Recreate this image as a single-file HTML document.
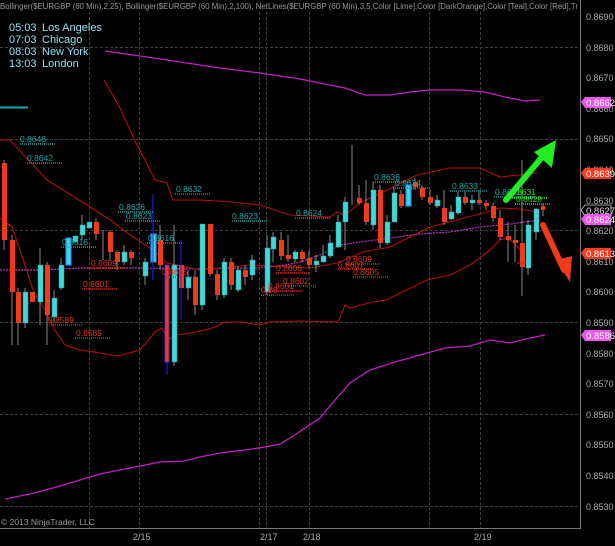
<!DOCTYPE html>
<html><head><meta charset="utf-8"><style>
html,body{margin:0;padding:0;background:#000;width:615px;height:546px;overflow:hidden}
svg{display:block}
text{font-family:"Liberation Sans",sans-serif}
</style></head><body>
<svg width="615" height="546" viewBox="0 0 615 546" xmlns="http://www.w3.org/2000/svg">
<rect width="615" height="546" fill="#000"/>
<g stroke="#3a3f44" stroke-width="1" stroke-dasharray="3,2">
<line x1="0" y1="47.5" x2="580" y2="47.5"/><line x1="0" y1="139.5" x2="580" y2="139.5"/>
<line x1="0" y1="230.5" x2="580" y2="230.5"/><line x1="0" y1="322.5" x2="580" y2="322.5"/>
<line x1="0" y1="414.5" x2="580" y2="414.5"/><line x1="0" y1="506.5" x2="580" y2="506.5"/>
<line x1="89.5" y1="12" x2="89.5" y2="528"/><line x1="139.5" y1="12" x2="139.5" y2="528"/>
<line x1="259.5" y1="12" x2="259.5" y2="528"/><line x1="266.5" y1="12" x2="266.5" y2="528"/>
<line x1="309.5" y1="12" x2="309.5" y2="528"/><line x1="429.5" y1="12" x2="429.5" y2="528"/>
<line x1="480.5" y1="12" x2="480.5" y2="528"/>
</g>
<line x1="580.5" y1="0" x2="580.5" y2="529" stroke="#777"/>
<line x1="0" y1="528.5" x2="581" y2="528.5" stroke="#777"/>
<g fill="#aaa" font-size="9">
<text x="586" y="20">0.8690</text><text x="586" y="51">0.8680</text><text x="586" y="81">0.8670</text>
<text x="586" y="112">0.8660</text><text x="586" y="142">0.8650</text><text x="586" y="173">0.8640</text>
<text x="586" y="204">0.8630</text><text x="586" y="234">0.8620</text><text x="586" y="265">0.8610</text>
<text x="586" y="295">0.8600</text><text x="586" y="326">0.8590</text><text x="586" y="357">0.8580</text>
<text x="586" y="387">0.8570</text><text x="586" y="418">0.8560</text><text x="586" y="448">0.8550</text>
<text x="586" y="479">0.8540</text><text x="586" y="510">0.8530</text>
<text x="133" y="540">2/15</text><text x="260" y="540">2/17</text><text x="303" y="540">2/18</text><text x="474" y="540">2/19</text>
</g>
<text x="1" y="525" fill="#999" font-size="8.5">© 2013 NinjaTrader, LLC</text>
<text x="0" y="9" fill="#999" font-size="8.5" textLength="578" lengthAdjust="spacingAndGlyphs">Bollinger($EURGBP (60 Min),2,25), Bollinger($EURGBP (60 Min),2,100), NetLines($EURGBP (60 Min),3,5,Color [Lime],Color [DarkOrange],Color [Teal],Color [Red],Tr</text>
<g fill="#8fe0f0" font-size="11">
<text x="9" y="31">05:03</text><text x="42" y="31">Los Angeles</text>
<text x="9" y="43">07:03</text><text x="42" y="43">Chicago</text>
<text x="9" y="55">08:03</text><text x="42" y="55">New York</text>
<text x="9" y="67">13:03</text><text x="42" y="67">London</text>
</g>
<line x1="0" y1="107.5" x2="28" y2="107.5" stroke="#1aa" stroke-width="2"/>
<g fill="none" stroke="#c020c0" stroke-width="1.3">
<path d="M105,51 L140,56 L180,62 L220,68 L260,73 L300,79 L330,85 L345,88 L365,95 L390,95 L410,92 L430,90 L460,90 L485,92 L505,97 L525,101 L540,100"/>
<path d="M5,499 L30,494 L45,490 L60,486 L80,480 L100,474 L120,470 L140,466 L160,462 L185,461 L200,457 L220,453 L245,450 L265,447 L280,444 L290,438 L305,428 L320,418 L335,400 L350,383 L370,370 L395,362 L420,355 L445,348 L470,346 L490,340 L510,343 L530,338 L545,335"/>
</g>
<g fill="none" stroke="#c030c0" stroke-width="1.2" stroke-dasharray="2,1">
<path d="M0,270 L40,270 L80,268 L140,268 L200,269 L250,268 L280,266 L300,262 L320,255 L340,245 L360,242 L390,238 L420,234 L450,232 L480,227 L510,224 L540,220"/>
</g>
<g fill="none" stroke="#b01010" stroke-width="1.1">
<path d="M104,80 L120,108 L135,141 L145,160 L155,180 L167,183 L173,200 L200,200 L233,202 L260,205 L290,215 L330,217 L337,212 L345,215 L360,203 L393,187 L417,175 L450,168 L480,168 L500,177 L537,173"/>
<path d="M0,140 L10,140 L47,180 L90,207 L110,220 L133,237 L153,250 L167,263 L200,270 L250,265 L310,268 L337,263 L363,252 L390,247 L410,237 L430,227 L457,220 L483,213 L500,208 L520,209 L537,212"/>
<path d="M0,218 L12,227 L20,250 L33,290 L45,310 L55,330 L65,345 L80,350 L100,353 L118,356 L140,350 L155,332 L162,328 L168,340 L175,335 L190,333 L205,330 L215,327 L225,322 L240,322 L260,325 L270,322 L300,321 L338,322 L345,305 L350,308 L373,302 L387,300 L400,293 L427,280 L450,275 L470,265 L490,250 L500,240 L507,238 L513,242 L523,253"/>
</g>
<g stroke="#888" stroke-width="1">
<path d="M4,160V250M12,235V345M18,288V345M25,288V328M40,248V325M47,262V345M54,290V322M61,258V290M82,215V240M96,218V240M103,230V260M110,230V260M117,250V270M124,245V265M131,250V265M145,258V285M160,225V270M174,225V366M188,270V300M195,270V315M202,224V310M210,225V276M217,270V300M224,258V298M231,258V290M238,266V292M245,265V285M252,255V280M267,235V295M273,232V262M281,232V260M288,235V262M295,250V262M302,250V262M309,250V268M316,255V272M323,245V262M330,235V258M338,215V248M345,197V250M352,145V205M359,185V205M366,180V225M373,182V230M380,185V248M387,215V245M394,188V222M401,190V208M415,178V190M422,185V200M430,190V205M437,195V208M444,190V225M451,205V220M458,192V215M465,192V205M472,195V210M479,190V205M486,200V210M493,203V222M500,210V240M508,222V262M515,225V262M522,160V296M528,220V275M536,208V240M543,204V216"/>
</g>
<g fill="#f03a1a">
<rect x="2" y="163" width="5" height="77"/><rect x="10" y="240" width="5" height="52"/><rect x="16" y="292" width="5" height="31"/>
<rect x="30" y="292" width="5" height="10"/><rect x="45" y="265" width="5" height="50"/><rect x="94" y="222" width="5" height="12"/>
<rect x="108" y="232" width="5" height="20"/><rect x="115" y="252" width="5" height="10"/><rect x="129" y="252" width="5" height="6"/>
<rect x="158" y="240" width="5" height="25"/><rect x="165" y="265" width="4" height="97" stroke="#62f" stroke-width="0.8"/><rect x="179" y="265" width="5" height="23"/>
<rect x="193" y="277" width="5" height="28"/><rect x="208" y="224" width="5" height="50"/><rect x="215" y="274" width="5" height="21"/>
<rect x="229" y="262" width="5" height="23"/><rect x="243" y="270" width="5" height="7"/><rect x="279" y="240" width="5" height="16"/>
<rect x="286" y="255" width="5" height="4"/><rect x="300" y="252" width="5" height="7"/><rect x="307" y="258" width="5" height="7"/>
<rect x="357" y="198" width="5" height="5"/><rect x="364" y="203" width="5" height="19"/><rect x="378" y="190" width="5" height="53"/>
<rect x="399" y="194" width="5" height="12"/><rect x="413" y="182" width="5" height="5"/><rect x="420" y="188" width="5" height="9"/>
<rect x="428" y="197" width="5" height="6"/><rect x="442" y="208" width="5" height="14"/><rect x="463" y="197" width="5" height="6"/>
<rect x="477" y="200" width="5" height="3"/><rect x="484" y="203" width="5" height="3"/><rect x="491" y="206" width="5" height="12"/>
<rect x="498" y="218" width="5" height="19"/><rect x="506" y="236" width="5" height="4"/><rect x="513" y="240" width="5" height="3"/>
<rect x="520" y="243" width="5" height="24"/><rect x="541" y="206" width="4" height="4"/>
</g>
<g fill="#40d8d8" stroke="#2a9a9a" stroke-width="0.5">
<rect x="23" y="292" width="5" height="31"/><rect x="38" y="265" width="5" height="37"/><rect x="52" y="298" width="5" height="19"/>
<rect x="59" y="265" width="5" height="23"/><rect x="66" y="238" width="5" height="27" stroke="#28f" stroke-width="1.2"/><rect x="73" y="236" width="5" height="6"/>
<rect x="80" y="225" width="5" height="10"/><rect x="87" y="222" width="5" height="6"/><rect x="122" y="252" width="5" height="10"/>
<rect x="143" y="262" width="5" height="14"/><rect x="151" y="234" width="5" height="28" stroke="#28f" stroke-width="1.2"/><rect x="172" y="265" width="5" height="97"/>
<rect x="186" y="277" width="5" height="11"/><rect x="200" y="224" width="5" height="81"/><rect x="222" y="262" width="5" height="33"/>
<rect x="236" y="270" width="5" height="20"/><rect x="250" y="260" width="5" height="15"/><rect x="265" y="248" width="5" height="44"/>
<rect x="271" y="237" width="5" height="12"/><rect x="293" y="252" width="5" height="7"/><rect x="314" y="261" width="5" height="4"/>
<rect x="321" y="256" width="5" height="6"/><rect x="328" y="243" width="5" height="13"/><rect x="336" y="222" width="5" height="25"/>
<rect x="343" y="202" width="5" height="20"/><rect x="371" y="190" width="5" height="35"/><rect x="385" y="222" width="5" height="21"/>
<rect x="392" y="193" width="5" height="29"/><rect x="406" y="185" width="5" height="21" stroke="#28f" stroke-width="1.2"/><rect x="435" y="200" width="5" height="6"/>
<rect x="449" y="212" width="5" height="7"/><rect x="456" y="197" width="5" height="16"/><rect x="470" y="200" width="5" height="3"/>
<rect x="526" y="225" width="5" height="43"/><rect x="534" y="209" width="5" height="23"/>
</g>
<line x1="153" y1="194" x2="153" y2="280" stroke="#22f" stroke-width="1"/>
<line x1="181" y1="240" x2="181" y2="320" stroke="#22f" stroke-width="1"/>
<line x1="167" y1="362" x2="167" y2="375" stroke="#22f" stroke-width="1"/>
<line x1="517" y1="263" x2="526" y2="263" stroke="#d02020" stroke-width="1"/>
<g stroke="#1a9a9a" stroke-width="1.5" stroke-dasharray="1,1">
<path d="M20,144H55M27,163H62M175,194H210M118,212H153M125,221H160M232,221H267M61,247H97M147,243H182M295,218H330M373,182H410M393,188H430M450,191H487M494,197H533"/>
</g>
<g stroke="#20e020" stroke-width="1.5" stroke-dasharray="1,1"><path d="M510,198H548M515,204H550"/></g>
<g fill="#1aa8a8" font-size="8.5">
<text x="20" y="142">0.8648</text><text x="27" y="161">0.8642</text><text x="176" y="192">0.8632</text>
<text x="119" y="210">0.8626</text><text x="126" y="219">0.8623</text><text x="232" y="219">0.8623</text>
<text x="62" y="245">0.8616</text><text x="148" y="241">0.8616</text><text x="296" y="216">0.8624</text>
<text x="374" y="180">0.8636</text><text x="395" y="186">0.8634</text><text x="452" y="189">0.8633</text><text x="495" y="195">0.8631</text>
</g>
<g fill="#20e020" font-size="8.5"><text x="510" y="195">0.8631</text><text x="516" y="202">0.8629</text></g>
<g stroke="#e02020" stroke-width="1.5" stroke-dasharray="1,1">
<path d="M90,268H125M82,289H118M47,325H83M75,338H110M276,273H310M283,286H317M268,291H302M261,295H295M345,264H380M338,269H373M353,277H388M165,277H195"/>
</g>
<g fill="#e03020" font-size="8.5">
<text x="91" y="266">0.8609</text><text x="83" y="287">0.8601</text><text x="48" y="323">0.8589</text><text x="76" y="336">0.8585</text>
<text x="162" y="275">0.8605</text><text x="276" y="271">0.8606</text><text x="283" y="284">0.8602</text><text x="268" y="289">0.8601</text>
<text x="261" y="293">0.86</text><text x="346" y="262">0.8609</text><text x="338" y="268">0.8607</text><text x="353" y="275">0.8605</text>
</g>
<line x1="548" y1="150" x2="506" y2="200" stroke="#20ee20" stroke-width="6" stroke-linecap="round"/>
<polygon points="556,140 552,168 534,152" fill="#20ee20"/>
<line x1="543" y1="225" x2="564" y2="270" stroke="#f03a1a" stroke-width="6" stroke-linecap="round"/>
<polygon points="570,282 556,260 572,256" fill="#f03a1a"/>
<g font-size="9.5">
<polygon points="581,102 585,97 611,97 611,108 585,108" fill="#ee55ee"/><text x="586" y="106" fill="#fff">0.8662</text>
<polygon points="581,173 585,168 611,168 611,179 585,179" fill="#ff3a20"/><text x="586" y="177" fill="#fff">0.8639</text>
<polygon points="581,210 585,205 611,205 611,216 585,216" fill="#000" stroke="#ccc" stroke-width="0.8"/><text x="586" y="214" fill="#ddd">0.8627</text>
<polygon points="581,219 585,214 611,214 611,225 585,225" fill="#ee55ee"/><text x="586" y="223" fill="#fff">0.8624</text>
<polygon points="581,253 585,248 611,248 611,259 585,259" fill="#ff3a20"/><text x="586" y="257" fill="#fff">0.8613</text>
<polygon points="581,335 585,330 611,330 611,341 585,341" fill="#ee55ee"/><text x="586" y="339" fill="#fff">0.8586</text>
</g>
</svg>
</body></html>
